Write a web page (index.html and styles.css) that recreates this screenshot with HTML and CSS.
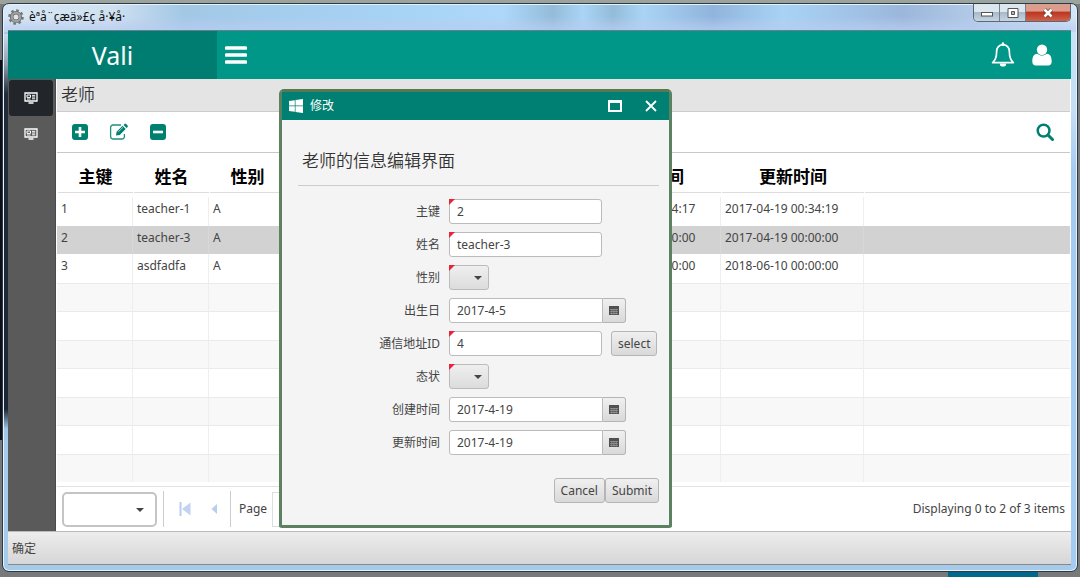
FILE: index.html
```html
<!DOCTYPE html>
<html lang="zh-CN">
<head>
<meta charset="utf-8">
<title>Vali</title>
<link rel="stylesheet" href="styles.css">
</head>
<body>
<div class="window">
  <header class="titlebar">
    <svg class="gear" viewBox="0 0 16 16"><circle cx="8" cy="8" r="6.600" fill="none" stroke="#777" stroke-width="2.400" stroke-dasharray="2.600 2.580"/><circle cx="8" cy="8" r="4.300" fill="none" stroke="#6c6c6c" stroke-width="3.600"/><circle cx="8" cy="8" r="4.200" fill="none" stroke="#a2a2a2" stroke-width="2"/><circle cx="8" cy="8" r="2" fill="#dce6ee"/></svg>
    <span class="window-title">èªå¨çæä»£ç å·¥å·</span>
    <div class="window-controls">
      <button class="wc" aria-label="最小化"><svg viewBox="0 0 12 10"><rect x=".5" y="4.500" width="11" height="3.500" fill="#fff" stroke="#555"/></svg></button>
      <button class="wc" aria-label="最大化"><svg viewBox="0 0 12 10"><path fill-rule="evenodd" d="M1 .5h10v9H1zM4.500 3.500v3h3v-3z" fill="#fff" stroke="#555"/></svg></button>
      <button class="wc wc-close" aria-label="关闭窗口"><svg viewBox="0 0 12 10"><path d="M2.500 1.500l7 7M9.500 1.500l-7 7" stroke="#6d3430" stroke-width="4"/><path d="M2.500 1.500l7 7M9.500 1.500l-7 7" stroke="#fff" stroke-width="2.600"/></svg></button>
    </div>
  </header>
  <div class="app">
    <div class="topbar">
      <div class="brand">Vali</div>
      <button class="icon-btn burger" aria-label="菜单"><svg viewBox="0 0 22 18"><path d="M1.500 2h19M1.500 9h19M1.500 16h19" stroke="#fff" stroke-width="3.600" stroke-linecap="round"/></svg></button>
      <div class="topbar-right">
        <button class="icon-btn" aria-label="通知"><svg class="bell" viewBox="0 0 24 26"><path d="M12 2.600C7.500 3 5.600 6.200 5.600 10c0 5.400-1.600 8.500-4 10.600h20.800c-2.400-2.100-4-5.200-4-10.600 0-3.800-1.900-7-6.400-7.400z" fill="none" stroke="#fff" stroke-width="1.700" stroke-linejoin="round"/><path d="M12 1.500v1.300" stroke="#fff" stroke-width="2.400" stroke-linecap="round"/><path d="M8.800 21.400h6.400a3.200 3.200 0 0 1-6.400 0z" fill="#fff"/></svg></button>
        <button class="icon-btn" aria-label="用户"><svg class="user" viewBox="0 0 20 22"><circle cx="10" cy="5.700" r="5.200" fill="#fff"/><path d="M5.300 9.800C2 10 .3 12.500.3 17.500c0 2.600 1.300 4 3.500 4h12.400c2.200 0 3.500-1.400 3.500-4 0-5-1.700-7.500-5-7.700-2.700 2.400-6.700 2.400-9.400 0z" fill="#fff"/></svg></button>
      </div>
    </div>
    <div class="main">
      <nav class="sidebar">
        <a class="nav-item active" href="#" aria-label="老师"><svg viewBox="0 0 14 12"><path d="M1 1h12v8H1zM4.500 11h5" fill="none" stroke="#fff" stroke-width="1.300"/><path d="M3 3h3.500v2.400H3zM3 7h3.500M8 3.300h3.200M8 5h3.200M8 6.800h3.200" fill="none" stroke="#fff"/></svg></a>
        <a class="nav-item" href="#" aria-label="列表"><svg viewBox="0 0 14 12"><path d="M1 1h12v8H1zM4.500 11h5" fill="none" stroke="#fff" stroke-width="1.300"/><path d="M3 3h3.500v2.400H3zM3 7h3.500M8 3.300h3.200M8 5h3.200M8 6.800h3.200" fill="none" stroke="#fff"/></svg></a>
      </nav>
      <main class="content">
        <h1 class="page-title">老师</h1>
        <div class="toolbar">
          <button class="icon-btn" aria-label="新增"><svg class="tool" viewBox="0 0 18 18"><rect x="1" y="1" width="16" height="16" rx="3" fill="#008070"/><path d="M9 4v10M4 9h10" stroke="#fff" stroke-width="2.600"/></svg></button>
          <button class="icon-btn" aria-label="编辑"><svg class="tool-edit" viewBox="0 0 20 18"><path d="M12 2H4a2.400 2.400 0 0 0-2.400 2.400v9.200A2.400 2.400 0 0 0 4 16h9a2.400 2.400 0 0 0 2.400-2.400V11" fill="none" stroke="#218f80" stroke-width="1.300"/><path d="M7 12.500l.6-3.700 6-6 3.100 3.100-6 6zM14.500 1.900l1-1q.8-.6 1.600.1l1.500 1.500q.6.800 0 1.500l-1 1z" fill="#008070"/><path d="M9.200 8.900l5-4.800" stroke="#d8efec" stroke-width=".7"/></svg></button>
          <button class="icon-btn" aria-label="删除"><svg class="tool" viewBox="0 0 18 18"><rect x="1" y="1" width="16" height="16" rx="3" fill="#008070"/><path d="M4 9h10" stroke="#fff" stroke-width="2.600"/></svg></button>
          <button class="icon-btn search" aria-label="搜索"><svg class="tool" viewBox="0 0 18 18"><circle cx="7.600" cy="7.600" r="5.900" fill="none" stroke="#008070" stroke-width="2.500"/><path d="M12 12l4.500 4.500" stroke="#008070" stroke-width="3" stroke-linecap="round"/></svg></button>
        </div>
        <div class="grid">
          <table>
            <colgroup><col class="c-s"><col class="c-s"><col class="c-s"><col class="c-mid"><col class="c-time"><col class="c-time"><col></colgroup>
            <thead><tr><th><div>主键</div></th><th><div>姓名</div></th><th><div>性别</div></th><th><div></div></th><th><div>创建时间</div></th><th><div>更新时间</div></th><th><div></div></th></tr></thead>
            <tbody>
              <tr><td>1</td><td>teacher-1</td><td>A</td><td></td><td>2017-04-19 00:34:17</td><td>2017-04-19 00:34:19</td><td></td></tr>
              <tr class="selected"><td>2</td><td>teacher-3</td><td>A</td><td></td><td>2017-04-19 00:00:00</td><td>2017-04-19 00:00:00</td><td></td></tr>
              <tr><td>3</td><td>asdfadfa</td><td>A</td><td></td><td>2018-06-10 00:00:00</td><td>2018-06-10 00:00:00</td><td></td></tr>
              <tr class="blank odd"><td></td><td></td><td></td><td></td><td></td><td></td><td></td></tr>
              <tr class="blank"><td></td><td></td><td></td><td></td><td></td><td></td><td></td></tr>
              <tr class="blank odd"><td></td><td></td><td></td><td></td><td></td><td></td><td></td></tr>
              <tr class="blank"><td></td><td></td><td></td><td></td><td></td><td></td><td></td></tr>
              <tr class="blank odd"><td></td><td></td><td></td><td></td><td></td><td></td><td></td></tr>
              <tr class="blank"><td></td><td></td><td></td><td></td><td></td><td></td><td></td></tr>
              <tr class="blank odd"><td></td><td></td><td></td><td></td><td></td><td></td><td></td></tr>
            </tbody>
          </table>
        </div>
        <div class="pager">
          <div class="page-size"><select aria-label="每页条数"><option></option></select></div>
          <div class="pager-nav">
            <button class="icon-btn" aria-label="首页"><svg class="nav-ico" viewBox="0 0 12 16"><path d="M1.500 1v14" stroke="#b9cdf0" stroke-width="2"/><path d="M11.500 1.500v13L3 8z" fill="#c0d3f3"/></svg></button>
            <button class="icon-btn" aria-label="上一页"><svg class="nav-ico" viewBox="0 0 12 16"><path d="M9 3v10L3.500 8z" fill="#b9cdf0"/></svg></button>
          </div>
          <label class="page-label" for="page">Page</label>
          <input class="page-input" id="page" type="text">
          <span class="summary">Displaying 0 to 2 of 3 items</span>
        </div>
      </main>
    </div>
    <footer class="statusbar">确定</footer>
  </div>
</div>

<div class="dialog" role="dialog" aria-labelledby="dlg-title">
  <div class="dialog-bar">
    <svg class="win-logo" viewBox="0 0 14 14"><path d="M0 2l5.800-.8v5.400H0zM6.500 1.100L14 0v6.600H6.500zM0 7.300h5.800v5.500L0 12zM6.500 7.300H14V14l-7.500-1.100z" fill="#fff"/></svg>
    <span id="dlg-title" class="dialog-name">修改</span>
    <button class="icon-btn" aria-label="最大化对话框"><svg class="dlg-max" viewBox="0 0 14 12"><path d="M1 1v10h12V1z" fill="none" stroke="#fff" stroke-width="2"/><path d="M0 1.500h14" stroke="#fff" stroke-width="3"/></svg></button>
    <button class="icon-btn" aria-label="关闭"><svg class="dlg-close" viewBox="0 0 12 12"><path d="M1 1l10 10M11 1L1 11" stroke="#fff" stroke-width="1.800"/></svg></button>
  </div>
  <form class="dialog-body">
    <h2>老师的信息编辑界面</h2>
    <div class="fields">
      <label for="f1">主键</label>
      <div class="control"><span class="required"><input class="text" id="f1" type="text" value="2"></span></div>
      <label for="f2">姓名</label>
      <div class="control"><span class="required"><input class="text" id="f2" type="text" value="teacher-3"></span></div>
      <label for="f3">性别</label>
      <div class="control"><span class="required drop"><select id="f3"><option></option></select></span></div>
      <label for="f4">出生日</label>
      <div class="control date"><input class="text" id="f4" type="text" value="2017-4-5"><button class="btn cal" type="button" aria-label="选择出生日"><svg viewBox="0 0 10 9"><rect width="10" height="9" fill="#505050"/><path d="M1 3.500h8M1 5.500h8M1 7.500h8M2.800 3v5.500M5 3v5.500M7.200 3v5.500" stroke="#b5b5b5" stroke-width=".5"/></svg></button></div>
      <label for="f5">通信地址ID</label>
      <div class="control"><span class="required"><input class="text" id="f5" type="text" value="4"></span><button class="btn pick" type="button">select</button></div>
      <label for="f6">态状</label>
      <div class="control"><span class="required drop"><select id="f6"><option></option></select></span></div>
      <label for="f7">创建时间</label>
      <div class="control date"><input class="text" id="f7" type="text" value="2017-4-19"><button class="btn cal" type="button" aria-label="选择创建时间"><svg viewBox="0 0 10 9"><rect width="10" height="9" fill="#505050"/><path d="M1 3.500h8M1 5.500h8M1 7.500h8M2.800 3v5.500M5 3v5.500M7.200 3v5.500" stroke="#b5b5b5" stroke-width=".5"/></svg></button></div>
      <label for="f8">更新时间</label>
      <div class="control date"><input class="text" id="f8" type="text" value="2017-4-19"><button class="btn cal" type="button" aria-label="选择更新时间"><svg viewBox="0 0 10 9"><rect width="10" height="9" fill="#505050"/><path d="M1 3.500h8M1 5.500h8M1 7.500h8M2.800 3v5.500M5 3v5.500M7.200 3v5.500" stroke="#b5b5b5" stroke-width=".5"/></svg></button></div>
    </div>
    <div class="actions"><button class="btn" type="button">Cancel</button><button class="btn" type="button">Submit</button></div>
  </form>
</div>
</body>
</html>
```
FILE: styles.css
```css
* { box-sizing: border-box; }
body {
  margin: 0;
  min-height: 100vh;
  display: flex;
  padding: 3px 2px 5px;
  background:
    linear-gradient(#00688a, #00688a) 948px 100% / 90px 6px no-repeat,
    linear-gradient(90deg, #0c1016, #0c1016) 0 60px / 4px 380px no-repeat,
    linear-gradient(#9ca39d, #9ca39d) 0 0 / 100% 4px no-repeat,
    #77797b;
  font: 12px/16px "Noto Sans", "Noto Sans CJK SC", sans-serif;
  color: #444;
}
button, input, select { font: inherit; color: inherit; margin: 0; }
svg { display: block; }
.icon-btn { border: 0; padding: 0; background: none; }

.window {
  flex: 1;
  display: flex;
  flex-direction: column;
  padding: 0 6px 6px 5px;
  border: 1px solid #2c3a47;
  border-radius: 7px;
  box-shadow: inset 0 0 0 1px #e4f3fd;
  background:
    linear-gradient(#c9dcea, #8fa0b2 30px, #222b38 60px, #1d2634 375px, #9fc6e8 395px, #a6cbea) 0 30px / 6px 410px no-repeat,
    linear-gradient(#c9e2f6 0, #c4def5 80px, #a6cbf0 140px, #a6cbf0) 100% 28px / 6px 100% no-repeat,
    linear-gradient(#b9ccf000 45%, #b9ccf0aa 85%) 0 0 / 100% 28px no-repeat,
    linear-gradient(90deg, #d8e8f5 0, #cfe0f0 110px, #a3c8e6 180px, #a6d2f4 380px, #add8fa 500px, #94bcd9 550px, #a9d4f5 580px, #94bcd9 610px, #a9d4f5 640px, #91b4dc 710px, #a8d3f5 780px, #9bb7db 900px, #d3e6f7) 0 0 / 100% 28px no-repeat,
    #a6cbea;
}
.titlebar { display: flex; height: 27px; align-items: center; gap: 5px; border-bottom: 1px solid #63808d; }
.gear { width: 16px; height: 16px; }
.window-title { color: #111; }
.window-controls { display: flex; align-self: flex-start; margin-left: auto; border: 1px solid #5b6774; border-top: 0; border-radius: 0 0 5px 5px; overflow: hidden; }
.wc { display: flex; align-items: center; justify-content: center; width: 26px; height: 17px; padding: 0; border: 0; border-right: 1px solid #74808c; background: linear-gradient(#dce6ef 45%, #a9b9c8 50%, #c6d5e2); }
.wc svg { width: 12px; height: 10px; }
.wc-close { width: 44px; border-right: 0; background: linear-gradient(#dd9d8c 40%, #bd3622 50%, #d0634a); }

.app { flex: 1; display: flex; flex-direction: column; background: #fff; }
.topbar { display: flex; align-items: center; height: 48px; background: #009688; }
.brand { width: 209px; line-height: 48px; background: #007d71; color: #fff; text-align: center; font-family: "Noto Sans", sans-serif; font-size: 25px; }
.burger { margin-left: 8px; }
.burger svg { width: 22px; height: 18px; }
.topbar-right { display: flex; align-items: center; gap: 17px; margin-left: auto; padding-right: 19px; }
.bell { width: 24px; height: 26px; }
.user { width: 20px; height: 22px; }

.main { flex: 1; display: flex; }
.sidebar { width: 48px; padding: 1px 2px 1px 1px; background: #5a5a5a; border-right: 1px solid #4b4b4b; }
.nav-item { display: flex; align-items: center; justify-content: center; height: 36px; border-radius: 3px; }
.nav-item.active { background: #22262a; }
.nav-item svg { width: 14px; height: 12px; }
.content { flex: 1; min-width: 0; display: flex; flex-direction: column; padding: 0 1px; }
.page-title { margin: 0; padding-left: 4px; font-size: 17px; line-height: 32px; font-weight: 350; background: #e4e4e4; border-bottom: 1px solid #ccc; color: #333; }
.toolbar { display: flex; align-items: center; gap: 20px; height: 41px; padding: 0 16px 1px 14px; border-bottom: 1px solid #c8c8c8; }
.tool { width: 18px; height: 18px; }
.tool-edit { width: 20px; height: 18px; }
.search { margin-left: auto; }

.grid { flex: 1; display: flex; }
.grid table { width: 100%; table-layout: fixed; border-collapse: separate; border-spacing: 0; border-bottom: 4px solid #fff; }
.c-s { width: 76px; }
.c-mid { width: 293px; }
.c-time { width: 143px; }
.grid th { height: 44px; padding: 0 0 4px 1px; font-size: 17px; color: #000; }
.grid th div { height: 40px; padding-top: 4px; line-height: 40px; border-bottom: 1px solid #ddd; }
.grid td { height: 28px; padding: 0 0 4px 4px; border-right: 1px solid #eee; white-space: nowrap; }
.grid td:last-child { border-right: 0; }
.grid .blank td { border-top: 1px solid #eaeaea; }
.grid .odd td { background: #f8f8f8; }
.grid .selected td { background: #d2d2d2; border-right-color: #d8d8d8; }

.pager { display: flex; align-items: center; height: 45px; padding: 0 5px; border-top: 1px solid #e2e2e2; }
.page-size, .drop { position: relative; display: block; }
.page-size::after, .drop::after { content: ""; position: absolute; top: 50%; right: 13px; border: 4px solid transparent; border-top-color: #444; pointer-events: none; }
.page-size::after { margin-top: -1px; }
.drop::after { right: 7px; }
.page-size select { appearance: none; display: block; width: 95px; height: 35px; border: 2px solid #c4c4c4; border-radius: 5px; background: #fff; }
.pager-nav { display: flex; gap: 17px; margin: 0 8px 0 6px; padding: 10px 10px 10px 15px; border: solid #ccc; border-width: 0 1px; }
.nav-ico { width: 12px; height: 16px; }
.page-input { width: 60px; height: 35px; margin-left: 5px; border: 1px solid #ddd; }
.summary { margin-left: auto; }
.statusbar { height: 34px; padding: 0 4px; line-height: 33px; border-top: 1px solid #bbb; border-bottom: 1px solid #888; background: linear-gradient(#ededed, #d6d6d6); }

.dialog { position: absolute; left: 279px; top: 89px; width: 393px; border: 3px solid #5b8160; border-top-color: #567950; border-radius: 5px 5px 3px 3px; background: #f4f4f4; }
.dialog-bar { display: flex; align-items: center; height: 28px; padding: 0 12px 0 7px; gap: 23px; background: #008072; color: #fff; }
.win-logo { width: 14px; height: 14px; }
.dialog-name { margin: 0 auto 0 -16px; }
.dlg-max { width: 14px; height: 12px; }
.dlg-close { width: 12px; height: 12px; }
.dialog-body { padding: 28px 10px 22px 16px; }
.dialog-body h2 { margin: 0 0 13px; padding: 0 4px 12px; font-size: 17px; line-height: 25px; font-weight: 350; color: #333; border-bottom: 1px solid #ccc; }
.fields { display: grid; grid-template-columns: 142px 1fr; column-gap: 9px; row-gap: 8px; align-items: center; }
.fields label { text-align: right; }
.control { display: flex; gap: 9px; height: 25px; }
.text { display: block; width: 153px; height: 25px; padding: 0 7px; border: 1px solid #bbb; border-radius: 3px; background: #fff; }
.required { position: relative; display: block; }
.required::before { content: ""; position: absolute; left: 0; top: 0; border: solid transparent; border-width: 6px 6px 0 0; border-top-color: #e8233b; }
.drop select { appearance: none; display: block; width: 40px; height: 25px; border: 1px solid #bbb; border-radius: 3px; background: linear-gradient(#efefef, #dcdcdc); }
.drop::after { top: 11px; }
.date { gap: 0; }
.date .text { border-radius: 3px 0 0 3px; width: 154px; }
.btn { height: 25px; padding: 0 6px; border: 1px solid #b5b5b5; border-radius: 3px; background: linear-gradient(#f0f0f0, #d9d9d9); }
.cal { width: 23px; border-left: 0; border-radius: 0 3px 3px 0; padding: 0; display: flex; align-items: center; justify-content: center; }
.cal svg { width: 10px; height: 9px; }
.actions { display: flex; justify-content: flex-end; margin-top: 23px; }
```
